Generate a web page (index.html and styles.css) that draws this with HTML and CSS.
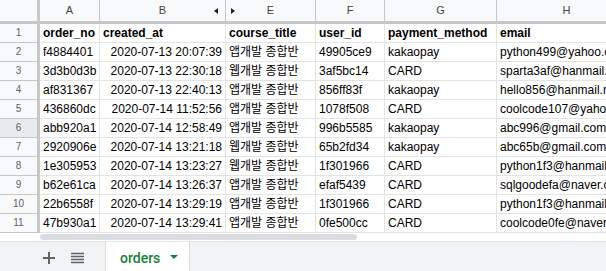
FILE: index.html
```html
<!DOCTYPE html>
<html lang="ko">
<head>
  <meta charset="UTF-8">
  <title>orders</title>
  <link rel="stylesheet" href="styles.css">
</head>
<body>

  <div class="sheet">
    <div class="row head">
      <div class="corner"></div>
      <div class="col">A</div>
      <div class="col colB">B<span class="arr left"></span></div>
      <div class="col colE"><span class="arr right"></span>E</div>
      <div class="col">F</div>
      <div class="col">G</div>
      <div class="col">H</div>
    </div>

    <div class="row">
      <div class="num">1</div>
      <div class="cell b">order_no</div>
      <div class="cell b">created_at</div>
      <div class="cell b">course_title</div>
      <div class="cell b">user_id</div>
      <div class="cell b">payment_method</div>
      <div class="cell b">email</div>
    </div>
    <div class="row">
      <div class="num">2</div>
      <div class="cell">f4884401</div>
      <div class="cell r">2020-07-13 20:07:39</div>
      <div class="cell">앱개발 종합반</div>
      <div class="cell">49905ce9</div>
      <div class="cell">kakaopay</div>
      <div class="cell">python499@yahoo.com</div>
    </div>
    <div class="row">
      <div class="num">3</div>
      <div class="cell">3d3b0d3b</div>
      <div class="cell r">2020-07-13 22:30:18</div>
      <div class="cell">웹개발 종합반</div>
      <div class="cell">3af5bc14</div>
      <div class="cell">CARD</div>
      <div class="cell">sparta3af@hanmail.net</div>
    </div>
    <div class="row">
      <div class="num">4</div>
      <div class="cell">af831367</div>
      <div class="cell r">2020-07-13 22:40:13</div>
      <div class="cell">앱개발 종합반</div>
      <div class="cell">856ff83f</div>
      <div class="cell">kakaopay</div>
      <div class="cell">hello856@hanmail.net</div>
    </div>
    <div class="row">
      <div class="num">5</div>
      <div class="cell">436860dc</div>
      <div class="cell r">2020-07-14 11:52:56</div>
      <div class="cell">앱개발 종합반</div>
      <div class="cell">1078f508</div>
      <div class="cell">CARD</div>
      <div class="cell">coolcode107@yahoo.com</div>
    </div>
    <div class="row">
      <div class="num hover">6</div>
      <div class="cell">abb920a1</div>
      <div class="cell r">2020-07-14 12:58:49</div>
      <div class="cell">앱개발 종합반</div>
      <div class="cell">996b5585</div>
      <div class="cell">kakaopay</div>
      <div class="cell">abc996@gmail.com</div>
    </div>
    <div class="row">
      <div class="num">7</div>
      <div class="cell">2920906e</div>
      <div class="cell r">2020-07-14 13:21:18</div>
      <div class="cell">웹개발 종합반</div>
      <div class="cell">65b2fd34</div>
      <div class="cell">kakaopay</div>
      <div class="cell">abc65b@gmail.com</div>
    </div>
    <div class="row">
      <div class="num">8</div>
      <div class="cell">1e305953</div>
      <div class="cell r">2020-07-14 13:23:27</div>
      <div class="cell">웹개발 종합반</div>
      <div class="cell">1f301966</div>
      <div class="cell">CARD</div>
      <div class="cell">python1f3@hanmail.net</div>
    </div>
    <div class="row">
      <div class="num">9</div>
      <div class="cell">b62e61ca</div>
      <div class="cell r">2020-07-14 13:26:37</div>
      <div class="cell">앱개발 종합반</div>
      <div class="cell">efaf5439</div>
      <div class="cell">CARD</div>
      <div class="cell">sqlgoodefa@naver.com</div>
    </div>
    <div class="row">
      <div class="num">10</div>
      <div class="cell">22b6558f</div>
      <div class="cell r">2020-07-14 13:29:19</div>
      <div class="cell">앱개발 종합반</div>
      <div class="cell">1f301966</div>
      <div class="cell">CARD</div>
      <div class="cell">python1f3@hanmail.net</div>
    </div>
    <div class="row">
      <div class="num">11</div>
      <div class="cell">47b930a1</div>
      <div class="cell r">2020-07-14 13:29:41</div>
      <div class="cell">앱개발 종합반</div>
      <div class="cell">0fe500cc</div>
      <div class="cell">CARD</div>
      <div class="cell">coolcode0fe@naver.com</div>
    </div>

    <div class="scroll">
      <div class="thumb"></div>
    </div>
  </div>

  <div class="tabbar">
    <div class="tools">
      <svg class="icon" width="14" height="14" viewBox="0 0 14 14">
        <path d="M7 1v12M1 7h12" stroke="#5f6368" stroke-width="2"/>
      </svg>
      <svg class="icon" width="13" height="12" viewBox="0 0 13 12">
        <path d="M0 1.5h13M0 4.5h13M0 7.5h13M0 10.5h13" stroke="#5f6368" stroke-width="1.6"/>
      </svg>
    </div>
    <div class="tab">
      <span>orders</span>
      <svg width="8" height="5" viewBox="0 0 8 5"><path d="M0 0h8L4 4z" fill="#188038"/></svg>
    </div>
  </div>

</body>
</html>
```

FILE: styles.css
```css
body {
  margin: 0;
  width: 606px;
  height: 271px;
  overflow: hidden;
  background: #fff;
  font-family: "Liberation Sans", Arial, "Noto Sans CJK KR", sans-serif;
  font-size: 12px;
  color: #000;
}
.sheet {
  width: 606px;
  overflow: hidden;
}
.row {
  display: grid;
  grid-template-columns: 40px 60px 126px 90px 69px 112px 140px;
  height: 19px;
  white-space: nowrap;
}
.row.head {
  height: 24px;
}
.corner, .col {
  background: #f8f9fa;
  border-bottom: 3px solid #c7c7c7;
  border-right: 1px solid #c7c7c7;
}
.corner {
  border-right: 3px solid #c7c7c7;
}
.col {
  position: relative;
  font-size: 11px;
  color: #444;
  text-align: center;
  line-height: 21px;
}
.arr {
  position: absolute;
  top: 8px;
  width: 0;
  height: 0;
  border-top: 3px solid transparent;
  border-bottom: 3px solid transparent;
}
.arr.left {
  right: 7px;
  border-right: 4px solid #222;
}
.arr.right {
  left: 5px;
  border-left: 4px solid #222;
}
.num {
  background: #f8f9fa;
  border-right: 3px solid #c7c7c7;
  border-bottom: 1px solid #c7c7c7;
  font-size: 10px;
  color: #5f6368;
  text-align: center;
  line-height: 18px;
}
.num.hover {
  background: #e8eaed;
}
.cell {
  border-right: 1px solid #e2e3e3;
  border-bottom: 1px solid #e2e3e3;
  padding: 0 3px;
  line-height: 18px;
  overflow: hidden;
}
.cell.b {
  font-weight: bold;
}
.cell.r {
  text-align: right;
}
.scroll {
  height: 7px;
  padding: 1px 0 0 40px;
}
.thumb {
  width: 317px;
  height: 6px;
  border-radius: 3px;
  background: #dadce0;
}
.tabbar {
  display: flex;
  height: 31px;
  background: #f1f3f4;
  border-top: 1px solid #e0e2e4;
}
.tools {
  display: flex;
  align-items: center;
  gap: 15px;
  padding-left: 42px;
  width: 63px;
}
.icon {
  display: block;
}
.tab {
  display: flex;
  align-items: center;
  gap: 10px;
  width: 85px;
  box-sizing: border-box;
  padding-left: 14px;
  background: #fff;
  border-left: 1px solid #dadce0;
  border-right: 1px solid #dadce0;
  color: #188038;
  font-family: Roboto, "Liberation Sans", sans-serif;
  font-size: 14px;
  font-weight: 500;
}
```
